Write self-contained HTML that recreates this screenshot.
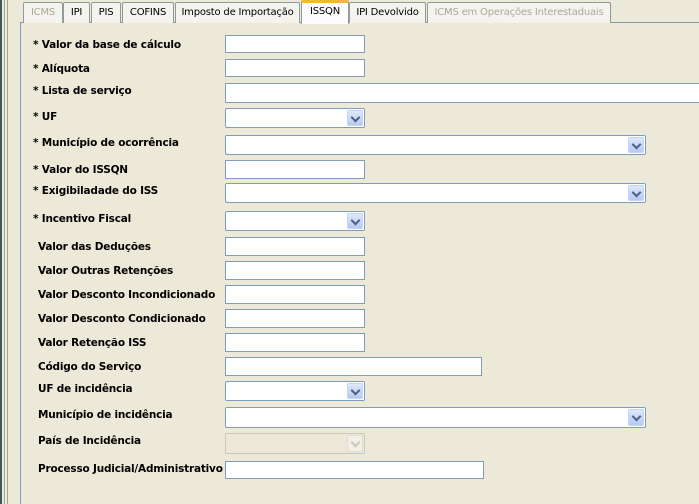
<!DOCTYPE html><html><head><meta charset="utf-8"><style>
*{margin:0;padding:0;box-sizing:border-box}
body{width:699px;height:504px;background:#ece9d8;position:relative;overflow:hidden;font-family:"DejaVu Sans","Liberation Sans",sans-serif}
.a{position:absolute}
.tab{position:absolute;top:2px;height:21px;border:1px solid #919b9c;border-bottom:none;background:#f4f3ee;font-size:10px;font-family:"DejaVu Sans",sans-serif;text-align:center;line-height:19px;color:#000;border-radius:2px 2px 0 0;white-space:nowrap;overflow:hidden;letter-spacing:-0.2px}
.dis{color:#aca899}
.l{position:absolute;font-weight:bold;font-size:10.5px;font-family:"DejaVu Sans",sans-serif;color:#000;white-space:nowrap;letter-spacing:-0.2px}
.f{position:absolute;background:#fff;border:1px solid #7f9db9}
.s{position:absolute;background:#fff;border:1px solid #7f9db9;border-radius:2px}
.s i{position:absolute;right:1px;top:1px;bottom:1px;width:16px;background:linear-gradient(#dfe8fb,#b7c9f0);border:1px solid #c3d3fd;border-radius:2px}
.s i:after{content:"";position:absolute;left:4px;top:3px;width:5px;height:5px;border-right:2px solid #4d6185;border-bottom:2px solid #4d6185;transform:rotate(45deg)}
.s.d{background:#ece9d8;border-color:#c9c7ba}
.s.d i{background:#f1efe6;border-color:#e0ded4}
.s.d i:after{border-color:#c9c7ba}
</style></head><body>
<div class="a" style="left:0;top:0;width:2px;height:504px;background:#3a5a5a"></div>
<div class="a" style="left:4px;top:0;width:1px;height:504px;background:#a0a0a0"></div>
<div class="a" style="left:7px;top:0;width:1px;height:504px;background:#a0a0a0"></div>
<div class="a" style="left:20px;top:22px;width:679px;height:482px;border-left:1px solid #7f9db9;border-top:1px solid #7f9db9"></div>
<div class="tab dis" style="left:23px;width:40px">ICMS</div>
<div class="tab" style="left:63px;width:27px">IPI</div>
<div class="tab" style="left:91px;width:30px">PIS</div>
<div class="tab" style="left:122px;width:52px">COFINS</div>
<div class="tab" style="left:175px;width:125px">Imposto de Importação</div>
<div class="tab" style="left:301px;top:0;width:48px;height:24px;background:#fcfcfe;border-top:3px solid #f5b73a;line-height:18px">ISSQN</div>
<div class="tab" style="left:349px;width:77px">IPI Devolvido</div>
<div class="tab dis" style="left:427px;width:184px">ICMS em Operações Interestaduais</div>

<div class="l" style="left:33px;top:39px">* Valor da base de cálculo</div><div class="f" style="left:225px;top:35px;width:140px;height:18px"></div>
<div class="l" style="left:33px;top:63px">* Alíquota</div><div class="f" style="left:225px;top:59px;width:140px;height:18px"></div>
<div class="l" style="left:33px;top:85px">* Lista de serviço</div><div class="f" style="left:225px;top:83px;width:480px;height:20px"></div>
<div class="l" style="left:33px;top:111px">* UF</div><div class="s" style="left:225px;top:108px;width:140px;height:20px"><i></i></div>
<div class="l" style="left:33px;top:137px">* Município de ocorrência</div><div class="s" style="left:225px;top:135px;width:421px;height:20px"><i></i></div>
<div class="l" style="left:33px;top:164px">* Valor do ISSQN</div><div class="f" style="left:225px;top:160px;width:140px;height:19px"></div>
<div class="l" style="left:33px;top:185px">* Exigibiladade do ISS</div><div class="s" style="left:225px;top:183px;width:421px;height:20px"><i></i></div>
<div class="l" style="left:33px;top:213px">* Incentivo Fiscal</div><div class="s" style="left:225px;top:211px;width:140px;height:20px"><i></i></div>
<div class="l" style="left:38px;top:241px">Valor das Deduções</div><div class="f" style="left:225px;top:237px;width:140px;height:19px"></div>
<div class="l" style="left:38px;top:265px">Valor Outras Retenções</div><div class="f" style="left:225px;top:261px;width:140px;height:19px"></div>
<div class="l" style="left:38px;top:289px">Valor Desconto Incondicionado</div><div class="f" style="left:225px;top:285px;width:140px;height:19px"></div>
<div class="l" style="left:38px;top:313px">Valor Desconto Condicionado</div><div class="f" style="left:225px;top:309px;width:140px;height:19px"></div>
<div class="l" style="left:38px;top:337px">Valor Retenção ISS</div><div class="f" style="left:225px;top:333px;width:140px;height:19px"></div>
<div class="l" style="left:38px;top:361px">Código do Serviço</div><div class="f" style="left:225px;top:357px;width:257px;height:19px"></div>
<div class="l" style="left:38px;top:383px">UF de incidência</div><div class="s" style="left:225px;top:381px;width:140px;height:20px"><i></i></div>
<div class="l" style="left:38px;top:409px">Município de incidência</div><div class="s" style="left:225px;top:407px;width:421px;height:21px"><i></i></div>
<div class="l" style="left:38px;top:435px">País de Incidência</div><div class="s d" style="left:225px;top:433px;width:140px;height:21px"><i></i></div>
<div class="l" style="left:38px;top:463px">Processo Judicial/Administrativo</div><div class="f" style="left:225px;top:461px;width:259px;height:18px"></div>
</body></html>
